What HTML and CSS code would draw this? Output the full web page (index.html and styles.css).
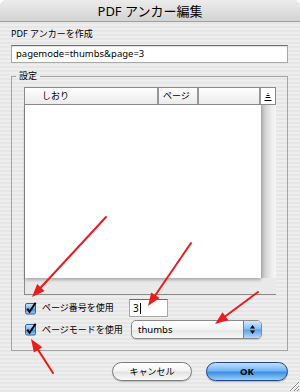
FILE: index.html
```html
<!DOCTYPE html>
<html lang="ja">
<head>
<meta charset="utf-8">
<title>PDF アンカー編集</title>
<link rel="stylesheet" href="styles.css">
</head>
<body>
<div class="window">
  <div class="titlebar"><span class="title">PDF アンカー編集</span></div>
  <div class="content">
    <div class="caption">PDF アンカーを作成</div>
    <div class="field">pagemode=thumbs&amp;page=3</div>
    <fieldset class="group">
      <legend>設定</legend>
      <div class="table">
        <div class="thead">
          <div class="th th-name">しおり</div>
          <div class="th th-page">ページ</div>
          <div class="th th-blank"></div>
          <div class="th th-sort">
            <svg width="8" height="9" viewBox="0 0 8 9"><path d="M3.5 1.5h1M2.5 3.5h3M1.5 5.5h5M0.5 8.5h7" stroke="#000" stroke-width="1"/></svg>
          </div>
        </div>
        <div class="tbody">
          <div class="rows"></div>
          <div class="vscroll"></div>
        </div>
        <div class="hscroll"></div>
      </div>
      <div class="opt opt-first">
        <span class="check"><svg width="13" height="13" viewBox="0 0 13 13"><defs><linearGradient id="cb" x1="0" y1="0" x2="0" y2="1"><stop offset="0" stop-color="#d2e8fd"/><stop offset="0.5" stop-color="#6fb0ef"/><stop offset="0.55" stop-color="#3e8fe2"/><stop offset="1" stop-color="#9fd0fa"/></linearGradient></defs><rect x="1.5" y="1.5" width="10" height="10.5" rx="1.5" fill="url(#cb)" stroke="#39609c"/><path d="M3.3 6.6 L5.6 9.8 L11.6 0.8" fill="none" stroke="#000" stroke-width="2"/></svg></span>
        <span class="opt-label">ページ番号を使用</span>
        <div class="num">3<span class="caret"></span></div>
      </div>
      <div class="opt">
        <span class="check"><svg width="13" height="13" viewBox="0 0 13 13"><defs><linearGradient id="cb2" x1="0" y1="0" x2="0" y2="1"><stop offset="0" stop-color="#d2e8fd"/><stop offset="0.5" stop-color="#6fb0ef"/><stop offset="0.55" stop-color="#3e8fe2"/><stop offset="1" stop-color="#9fd0fa"/></linearGradient></defs><rect x="1.5" y="1.5" width="10" height="10.5" rx="1.5" fill="url(#cb2)" stroke="#39609c"/><path d="M3.3 6.6 L5.6 9.8 L11.6 0.8" fill="none" stroke="#000" stroke-width="2"/></svg></span>
        <span class="opt-label">ページモードを使用</span>
        <div class="popup">
          <span class="popup-text">thumbs</span>
          <span class="popup-cap"><svg width="7" height="11" viewBox="0 0 7 11"><path d="M3.5 1 L6 4.5 H1 Z M3.5 10 L6 6.5 H1 Z" fill="#000"/></svg></span>
        </div>
      </div>
    </fieldset>
    <div class="buttons">
      <button class="btn cancel">キャンセル</button>
      <button class="btn ok">OK</button>
    </div>
  </div>
  <svg class="grip" width="14" height="14" viewBox="0 0 14 14"><path d="M13 4 L4 13 M13 8 L8 13 M13 11 L11 13" stroke="#8a8a8a" stroke-width="1"/><path d="M13 5 L5 13 M13 9 L9 13" stroke="#fff" stroke-width="1"/></svg>
  <svg class="arrows" width="300" height="392" viewBox="0 0 300 392">
    <g stroke="#ea1c1c" stroke-width="2" stroke-linecap="round">
      <line x1="106" y1="217" x2="40.8" y2="287.5"/>
      <line x1="191" y1="243" x2="155.3" y2="295.3"/>
      <line x1="258" y1="292" x2="225.4" y2="316.2"/>
      <line x1="53" y1="373" x2="38.1" y2="349.9"/>
    </g>
    <g fill="#ea1c1c">
      <polygon points="32,297 37.2,284.1 44.5,290.9"/>
      <polygon points="148,306 151.2,292.4 159.5,298.1"/>
      <polygon points="215,324 222.5,312.2 228.4,320.3"/>
      <polygon points="31,339 42.3,347.2 33.9,352.6"/>
    </g>
  </svg>
</div>
</body>
</html>
```
FILE: styles.css
```css
* { box-sizing: border-box; }
body {
  margin: 0;
  background: #fff;
  font-family: "Noto Sans", "Noto Sans CJK JP", sans-serif;
  color: #000;
}
.window {
  position: relative;
  width: 300px;
  height: 392px;
  overflow: hidden;
  border-radius: 6px 6px 0 0;
  background: repeating-linear-gradient(180deg, #eeeeee 0 2px, #e6e6e6 2px 4px);
}
.titlebar {
  height: 22px;
  border-bottom: 1px solid #a0a0a0;
  background: linear-gradient(#ececec, #d3d3d3);
  display: flex;
  align-items: center;
  justify-content: center;
  font-size: 13px;
  line-height: 16px;
}
.content { padding: 0 12px 0 11px; }
.caption {
  margin-top: 6px;
  font-size: 9px;
  line-height: 12px;
}
.field {
  margin-top: 5px;
  height: 18px;
  border: 1px solid #a8a8a8;
  border-top-color: #6e6e6e;
  background: #fff;
  font-size: 9.5px;
  line-height: 16px;
  padding-left: 4px;
  box-shadow: inset 0 1px 1px rgba(0,0,0,0.12);
}
.group {
  margin: 7px 0 0;
  padding: 5px 11px 11px 12px;
  border: 1px solid #a4a4a4;
  min-width: 0;
}
.group legend {
  margin-left: -8px;
  padding: 0 3px;
  font-size: 9px;
  line-height: 12px;
}
.table {
  border-left: 1px solid #8b8b8b;
  border-bottom: 1px solid #8b8b8b;
}
.thead {
  display: flex;
  height: 18px;
  border-top: 1px solid #8b8b8b;
  border-bottom: 1px solid #8b8b8b;
}
.th {
  background: linear-gradient(#fefefe, #ebebeb);
  border-right: 2px solid #979797;
  font-size: 9px;
  line-height: 16px;
}
.th-name { width: 134px; padding-left: 17px; }
.th-page { width: 40px; padding-left: 4px; }
.th-blank { width: 62px; }
.th-sort {
  width: 15px;
  border-right: 1px solid #8b8b8b;
  display: flex;
  align-items: center;
  justify-content: center;
  background: #fff;
}
.tbody {
  display: flex;
  height: 173px;
}
.rows {
  width: 236px;
  background: #fff;
  position: relative;
  z-index: 1;
  box-shadow: 0 2px 3px rgba(0,0,0,0.28);
}
.vscroll {
  width: 15px;
  background: linear-gradient(90deg, #b8b8b8, #d8d8d8 35%, #efefef 75%, #f6f6f6);
}
.hscroll {
  height: 16px;
  background: #e9e9e9;
}
.opt {
  display: flex;
  align-items: center;
  margin-top: 3px;
}
.opt-first { margin-top: 4px; }
.check {
  width: 13px;
  height: 13px;
  margin-right: 5px;
  display: flex;
}
.opt-label {
  width: 87px;
  font-size: 9px;
  line-height: 12px;
}
.num {
  width: 39px;
  height: 18px;
  border: 1px solid #a8a8a8;
  border-top-color: #6e6e6e;
  background: #fff;
  font-size: 10px;
  line-height: 16px;
  padding-left: 3px;
  display: flex;
  align-items: center;
}
.caret {
  display: inline-block;
  width: 1px;
  height: 11px;
  background: #000;
  margin-left: 1px;
}
.popup {
  margin-left: 2px;
  width: 131px;
  height: 19px;
  border: 1px solid #8a8a8a;
  border-radius: 5px;
  display: flex;
  overflow: hidden;
  background: linear-gradient(#ffffff, #f3f3f3 50%, #e6e6e6 52%, #f7f7f7);
  box-shadow: 0 1px 1px rgba(0,0,0,0.15);
}
.popup-text {
  flex: 1;
  padding-left: 6px;
  font-size: 9.5px;
  line-height: 17px;
}
.popup-cap {
  width: 18px;
  border-left: 1px solid #5b86c2;
  background: linear-gradient(#d4e9fc, #84bdf0 48%, #5aa1e8 52%, #b4dafc);
  display: flex;
  align-items: center;
  justify-content: center;
}
.buttons {
  display: flex;
  justify-content: flex-end;
  gap: 14px;
  margin-top: 11px;
}
.btn {
  height: 19px;
  border-radius: 10px;
  padding: 0;
  font-family: "Noto Sans", "Noto Sans CJK JP", sans-serif;
  font-size: 9px;
  line-height: 17px;
  color: #000;
}
.cancel {
  width: 80px;
  border: 1px solid #7c7c7c;
  background: linear-gradient(#ffffff, #f4f4f4 45%, #e3e3e3 55%, #fbfbfb);
  box-shadow: 0 1px 1px rgba(0,0,0,0.2);
}
.ok {
  width: 82px;
  border: 1px solid #24478c;
  background: linear-gradient(#c0e0fc, #74b5f3 45%, #3d8fe4 55%, #96cefa);
  box-shadow: 0 1px 1px rgba(0,0,0,0.25);
  font-weight: bold;
  font-size: 9.5px;
}
.grip {
  position: absolute;
  right: 0;
  bottom: 0;
}
.arrows {
  position: absolute;
  left: 0;
  top: 0;
  z-index: 2;
  pointer-events: none;
}
```
